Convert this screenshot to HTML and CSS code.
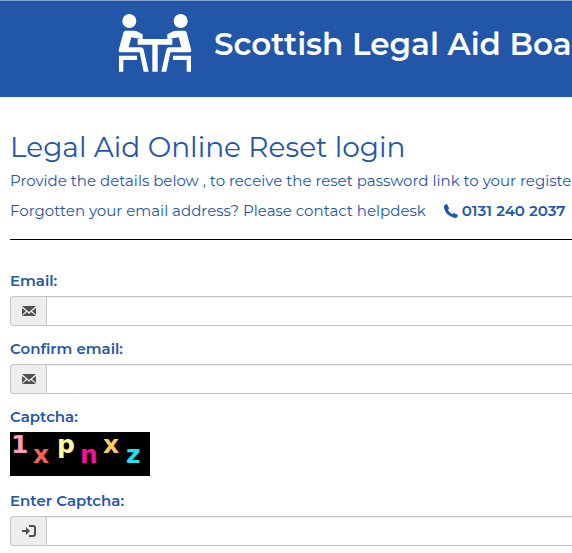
FILE: index.html
```html
<!DOCTYPE html>
<html lang="en">
<head>
  <meta charset="UTF-8" />
  <meta name="viewport" content="width=device-width, initial-scale=1.0" />
  <title>Legal Aid Online Reset login</title>
  <link rel="stylesheet" href="styles.css">
</head>
<body>
  <header class="banner">
    <svg class="logo" viewBox="0 0 222 180" aria-hidden="true">
      <defs>
        <g id="person">
          <circle cx="34" cy="21" r="21" />
          <path d="M22 50h26q4 0 8 2l18 9v15l-34-6-8 30h36q7 0 9 7l15 66H77L65 115H8q-8 0-5-10L16 56q2-6 6-6z" />
          <path d="M3 125h54v13H16v35H3z" />
        </g>
      </defs>
      <g fill="#fff">
        <use href="#person" />
        <use href="#person" transform="translate(222 0) scale(-1 1)" />
        <path d="M59 75h104v17h-44v81h-16V92H59z" />
      </g>
    </svg>
    <span class="brand">Scottish Legal Aid Boa</span>
  </header>

  <main class="content">
    <h1>Legal Aid Online Reset login</h1>
    <p>Provide the details below , to receive the reset password link to your register</p>
    <p class="help">
      <span>Forgotten your email address? Please contact helpdesk</span>
      <a class="phone" href="tel:01312402037">
        <svg viewBox="0 0 14 14" aria-hidden="true"><path fill="currentColor" d="M0 2Q1 0 3 0l2 4q0 1-1 2 1 2 4 4l2-1 4 2q0 2-2 3-3 0-6-2Q1 9 0 4z" /></svg>
        <span>0131 240 2037</span>
      </a>
    </p>
    <hr>

    <form id="reset-form">
      <div class="form-group">
        <label for="email">Email:</label>
        <div class="input-group">
          <span class="addon">
            <svg viewBox="0 0 14 10" aria-hidden="true"><path fill="currentColor" d="M0 0h14L7 6zM0 2l4 3-4 4zM14 2l-4 3 4 4zM5 6l2 2 2-2 5 4H0z" /></svg>
          </span>
          <input type="email" id="email" />
        </div>
      </div>
      <div class="form-group">
        <label for="confirm-email">Confirm email:</label>
        <div class="input-group">
          <span class="addon">
            <svg viewBox="0 0 14 10" aria-hidden="true"><path fill="currentColor" d="M0 0h14L7 6zM0 2l4 3-4 4zM14 2l-4 3 4 4zM5 6l2 2 2-2 5 4H0z" /></svg>
          </span>
          <input type="email" id="confirm-email" />
        </div>
      </div>
      <div class="form-group">
        <span class="caption">Captcha:</span>
        <svg class="captcha" viewBox="0 0 140 44" role="img" aria-label="Captcha">
          <rect width="140" height="44" />
          <text x="1" y="21" fill="#ff9dbb">1</text>
          <text x="23" y="31" fill="#f2625c">x</text>
          <text x="47" y="21" fill="#fffa9e">p</text>
          <text x="70" y="31" fill="#f5109c">n</text>
          <text x="93" y="21" fill="#ffc860">x</text>
          <text x="116" y="31" fill="#22e0f2">z</text>
        </svg>
      </div>
      <div class="form-group">
        <label for="captcha-text">Enter Captcha:</label>
        <div class="input-group">
          <span class="addon">
            <svg class="enter" viewBox="0 0 14 12" aria-hidden="true"><path fill="currentColor" d="M0 5h4V2l4 4-4 4V7H0z" /><path fill="none" stroke="currentColor" stroke-width="2" d="M7 1h4q2 0 2 2v6q0 2-2 2H7" /></svg>
          </span>
          <input type="text" id="captcha-text" />
        </div>
      </div>
    </form>
  </main>
</body>
</html>
```
FILE: styles.css
```css
* { box-sizing: border-box; margin: 0; padding: 0; }
body {
  font-family: Montserrat, Inter, sans-serif;
  font-size: 15px;
  line-height: 20px;
  color: #2456a8;
  background: #fff;
  overflow: hidden;
}
.banner {
  display: flex;
  align-items: center;
  gap: 22px;
  height: 97px;
  padding: 0 0 10px 118px;
  border-top: 1px solid #86a3d2;
  background: #2156a9;
  color: #fff;
  white-space: nowrap;
}
.logo {
  flex: none;
  width: 74px;
  height: 60px;
}
.brand {
  font-size: 31px;
  line-height: 40px;
  font-weight: 600;
}
.content {
  padding: 32px 0 0 10px;
  white-space: nowrap;
}
h1 {
  font-size: 28px;
  line-height: 36px;
  font-weight: 400;
  margin-bottom: 6px;
}
p {
  margin-bottom: 10px;
}
.help {
  display: flex;
  gap: 18px;
}
.phone {
  display: flex;
  align-items: center;
  gap: 4px;
  color: inherit;
  font-weight: 600;
  text-decoration: none;
}
.phone svg {
  width: 14px;
  height: 14px;
}
hr {
  border: 0;
  border-top: 1px solid #000;
  margin: 18px 0 32px;
}
.form-group {
  margin-bottom: 14px;
}
label,
.caption {
  display: block;
  font-weight: 600;
  line-height: 18px;
  margin-bottom: 6px;
}
.input-group {
  display: flex;
  height: 30px;
}
.addon {
  display: flex;
  flex: none;
  align-items: center;
  justify-content: center;
  width: 36px;
  border: 1px solid #c4c4c4;
  border-right: 0;
  border-radius: 4px 0 0 4px;
  background: #eee;
  color: #505050;
}
.addon svg {
  width: 14px;
  height: 10px;
}
.addon .enter {
  height: 12px;
}
input {
  flex: 1;
  min-width: 0;
  border: 1px solid #c4c4c4;
  border-right: 0;
  padding: 0 12px;
  font: inherit;
  outline: none;
  box-shadow: inset 0 1px 1px rgba(0,0,0,0.08);
}
.captcha {
  display: block;
  width: 140px;
  height: 44px;
  margin-bottom: 16px;
  font: bold 25px "DejaVu Sans", sans-serif;
}
```
